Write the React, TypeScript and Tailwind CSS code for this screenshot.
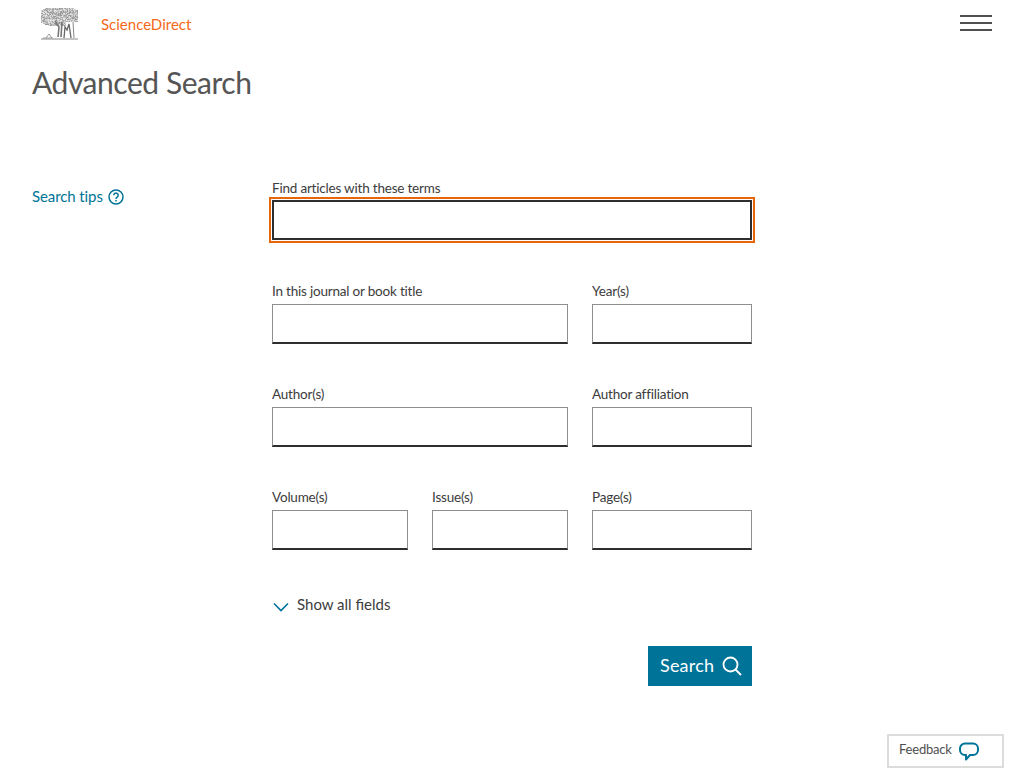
import React from "react";

const font = { fontFamily: '"Lato", "Noto Sans", sans-serif' };

function Field({ label, className, focused }: { label: string; className: string; focused?: boolean }) {
  return (
    <div className={className}>
      <label
        className={
          focused
            ? "block h-[22px] text-[13.5px] leading-[20px] tracking-[-0.2px] text-[#3c3c3c]"
            : "block h-[22px] text-[13.5px] leading-[18px] tracking-[-0.2px] text-[#3c3c3c]"
        }
      >
        {label}
      </label>
      <div
        className={
          focused
            ? "h-[40px] border-2 border-[#2e2e2e] bg-white outline outline-2 outline-offset-1 outline-[#e9650a]"
            : "h-[40px] border border-b-2 border-[#8e8e8e] border-b-[#2e2e2e] bg-white"
        }
      />
    </div>
  );
}

function hash(x: number, y: number) {
  const v = Math.sin(x * 12.9898 + y * 78.233) * 43758.5453;
  return v - Math.floor(v);
}

function Tree() {
  const dots: React.ReactNode[] = [];
  for (let y = 1; y < 19; y += 1) {
    for (let x = 0; x < 37; x += 1) {
      const dx = (x - 18) / 18.5;
      const dy = (y - 9) / 10;
      const d = dx * dx * 0.9 + dy * dy * dy * dy;
      if (d > 1) continue;
      if (y > 14 && x > 24) continue;
      const h = hash(x, y);
      dots.push(<rect key={`${x}-${y}`} x={x} y={y} width="1" height="1" fill="#666" opacity={0.12 + h * 0.6} />);
    }
  }
  return (
    <svg width="38" height="34" viewBox="0 0 38 34" className="block">
      {dots}
      <path d="M14 14 L18 20 L17 30 M21 15 L20 30" stroke="#777" strokeWidth="1.6" fill="none" />
      <path d="M23 31 L24 20 L26 23 L28 17 L30 31" stroke="#666" strokeWidth="1.3" fill="none" />
      <path d="M32 15 L33 31" stroke="#888" strokeWidth="1" fill="none" />
      <path d="M0 32 H37" stroke="#888" strokeWidth="1" />
      <path d="M5 31 L8 27 L11 31 M2 31 H12" stroke="#999" strokeWidth="1" fill="none" />
    </svg>
  );
}

export default function App() {
  return (
    <div style={font} className="relative h-[768px] w-[1024px] overflow-hidden bg-white">
      <header className="flex h-[48px] items-start justify-between pl-[41px] pr-[32px]">
        <div className="flex items-center pt-[7px]">
          <Tree />
          <span className="ml-[22px] text-[15px] leading-[20px] text-[#f5691b]">ScienceDirect</span>
        </div>
        <div className="mt-[15px] flex w-[32px] flex-col gap-[5px]">
          <div className="h-[2px] bg-[#505050]" />
          <div className="h-[2px] bg-[#505050]" />
          <div className="h-[2px] bg-[#505050]" />
        </div>
      </header>
      <main className="px-[32px]">
        <h1 className="mt-[13px] text-[30px] font-normal leading-[42px] tracking-[-0.45px] text-[#555555]">Advanced Search</h1>
        <div className="mt-[75px] flex">
          <div className="w-[240px] pt-[6px]">
            <div className="flex items-center gap-[5px] text-[15px] leading-[24px] tracking-[-0.1px] text-[#007398]">
              Search tips
              <svg width="16" height="16" viewBox="0 0 16 16" fill="none" stroke="#007398" strokeWidth="1.5" className="mt-[2px]">
                <circle cx="8" cy="8" r="7" />
                <path d="M5.8 6.3a2.2 2.2 0 1 1 3.4 1.8c-.8.5-1.2 1-1.2 1.8" />
                <path d="M8 11v1.4" />
              </svg>
            </div>
          </div>
          <div className="w-[480px]">
            <Field label="Find articles with these terms" className="" focused />
            <div className="mt-[42px] flex gap-[24px]">
              <Field label="In this journal or book title" className="w-[296px]" />
              <Field label="Year(s)" className="w-[160px]" />
            </div>
            <div className="mt-[41px] flex gap-[24px]">
              <Field label="Author(s)" className="w-[296px]" />
              <Field label="Author affiliation" className="w-[160px]" />
            </div>
            <div className="mt-[41px] flex gap-[24px]">
              <Field label="Volume(s)" className="w-[136px]" />
              <Field label="Issue(s)" className="w-[136px]" />
              <Field label="Page(s)" className="w-[160px]" />
            </div>
            <div className="mt-[42px] flex h-[24px] items-center text-[15px] text-[#3c3c3c]">
              <svg width="16" height="10" viewBox="0 0 16 10" fill="none" stroke="#007398" strokeWidth="1.6" className="ml-[1px] mt-[5px]">
                <path d="M1 1.5 L8 8.5 L15 1.5" />
              </svg>
              <span className="ml-[8px]">Show all fields</span>
            </div>
            <div className="mt-[30px] flex justify-end">
              <button className="flex h-[40px] w-[104px] items-center gap-[8px] bg-[#007398] pl-[12px] text-[18px] tracking-[0.2px] text-white">
                <span className="mb-[2px]">Search</span>
                <svg width="20" height="20" viewBox="0 0 20 20" fill="none" stroke="#fff" strokeWidth="1.8">
                  <circle cx="8.5" cy="8.5" r="7" />
                  <path d="M13.5 13.5 L19 19" />
                </svg>
              </button>
            </div>
          </div>
        </div>
      </main>
      <div className="absolute left-[887px] top-[734px] flex h-[34px] w-[117px] items-center border-2 border-[#dcdcdc] bg-white pl-[10px] pb-[2px] text-[13px] tracking-[-0.2px] text-[#505050]">
        Feedback
        <svg width="20" height="19" viewBox="0 0 20 19" fill="none" stroke="#007398" strokeWidth="2" strokeLinejoin="round" className="ml-[7px] mt-[3px]">
          <path d="M6 1.5 H14 A5 5 0 0 1 19 6.5 V8 A5 5 0 0 1 14 13 H11 L7 17.5 V13 H6 A5 5 0 0 1 1 8 V6.5 A5 5 0 0 1 6 1.5 Z" />
        </svg>
      </div>
    </div>
  );
}
